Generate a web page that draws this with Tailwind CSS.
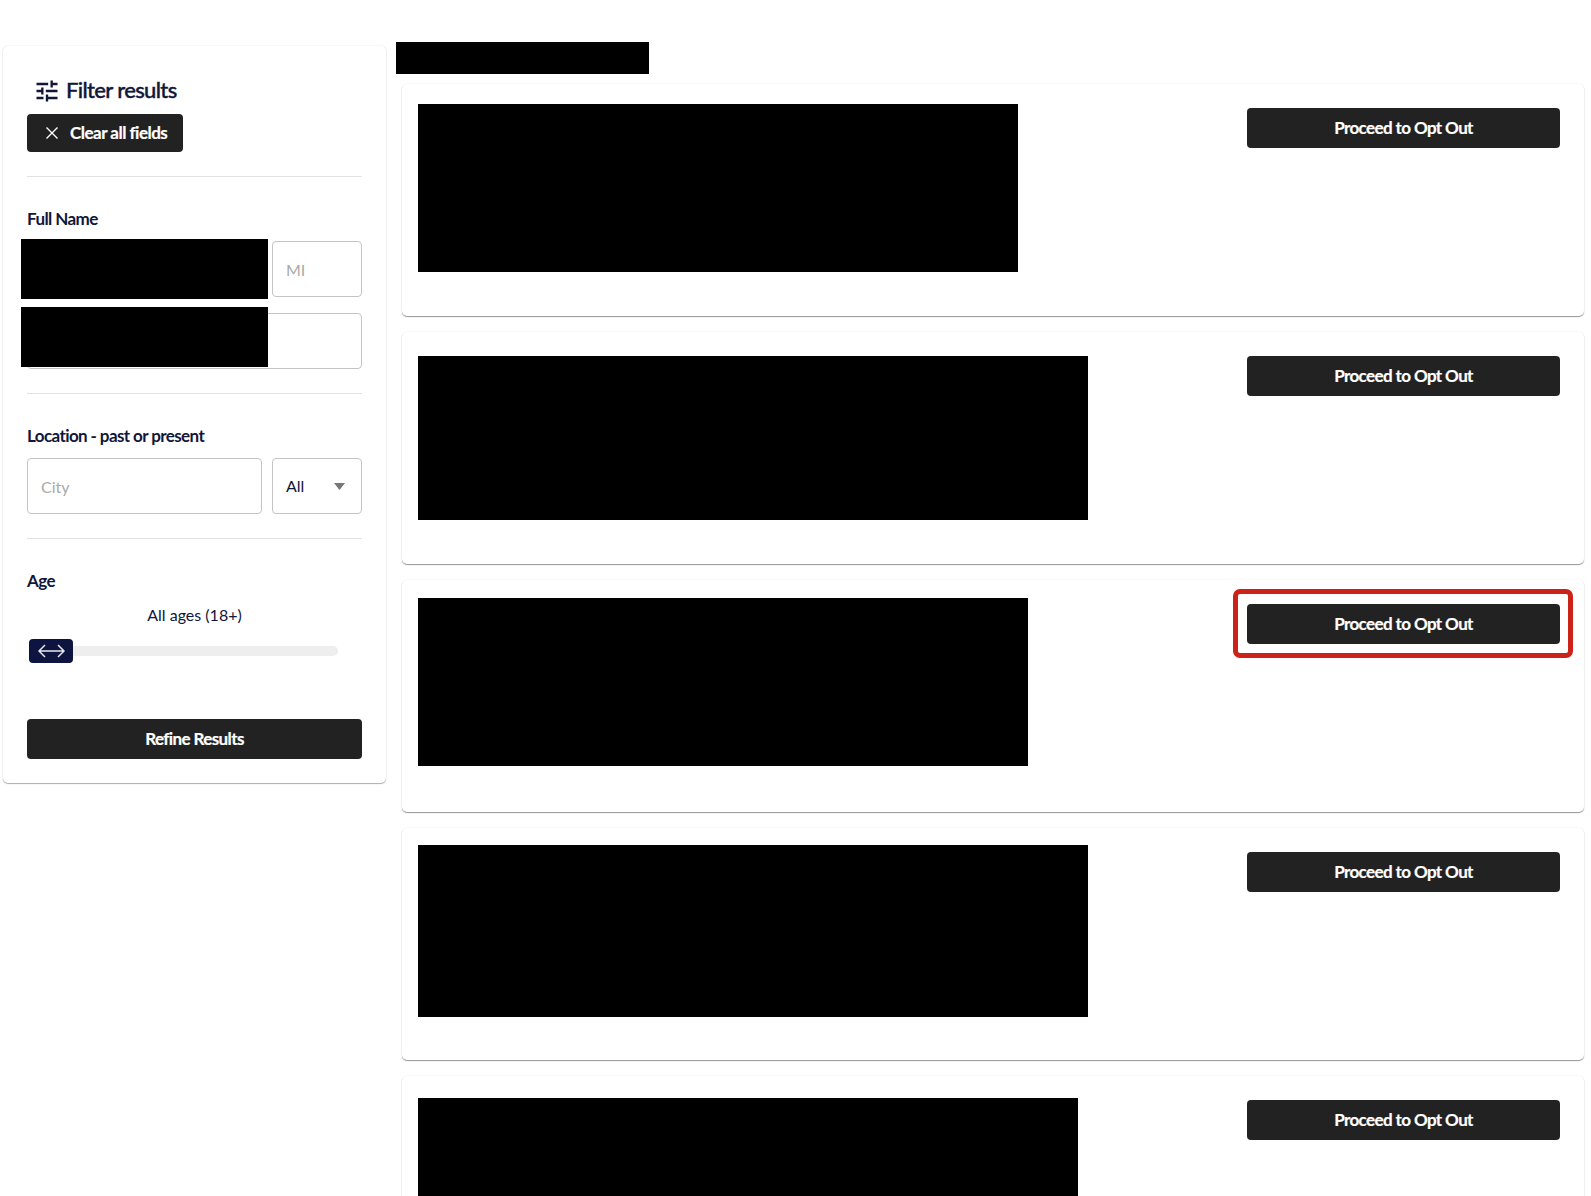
<!DOCTYPE html>
<html lang="en">
<head>
    <meta charset="UTF-8">
    <title>Search Results</title>
    <script src="https://cdn.jsdelivr.net/npm/@tailwindcss/browser@4"></script>
</head>
<body class="bg-white h-screen overflow-hidden font-['Lato','Noto_Sans',sans-serif] text-[#11163a]">
    <div class="flex items-start">

        <!-- Filter sidebar -->
        <aside class="ml-[3px] mt-[46px] w-[383px] h-[737px] shrink-0 px-6 pt-[31px] rounded-[5px] shadow-[0_0_2px_rgba(0,0,0,0.12),0_1px_1px_rgba(0,0,0,0.3)]">
            <div class="flex items-center gap-[5px] ml-[6px] h-7">
                <svg class="w-7 h-7" viewBox="0 0 24 24" fill="#11163a"><path d="M3 17v2h6v-2H3zM3 5v2h10V5H3zm10 16v-2h8v-2h-8v-2h-2v6h2zM7 9v2H3v2h4v2h2V9H7zm14 4v-2H11v2h10zm-6-4h2V7h4V5h-4V3h-2v6z"/></svg>
                <span class="pb-[2px] text-[22px] leading-7 font-medium tracking-[-0.65px] [-webkit-text-stroke:0.4px_#11163a]">Filter results</span>
            </div>
            <button class="mt-[9px] w-[156px] h-[38px] flex items-center pl-[19px] gap-[12px] bg-[#222222] rounded text-white text-[17px] font-bold tracking-[-0.5px] [-webkit-text-stroke:0.2px_white]">
                <svg class="w-3 h-3" viewBox="0 0 12 12" fill="none" stroke="white" stroke-width="1.4"><path d="M0.5 0.5l11 11M11.5 0.5l-11 11"/></svg>
                Clear all fields
            </button>
            <div class="mt-6 h-px bg-[#e2e2e2]"></div>

            <div class="mt-8 h-5 leading-5 text-[17px] font-bold tracking-[-0.6px]">Full Name</div>
            <div class="mt-3 relative flex gap-[10px]">
                <input placeholder="First" class="w-[235px] h-14 border border-[#c4c4c4] rounded">
                <input placeholder="MI" class="w-[90px] h-14 pl-[13px] border border-[#c4c4c4] rounded text-[16px] placeholder-[#aaaaaa]">
                <div class="absolute -left-[6px] -top-[2px] w-[247px] h-[60px] bg-black"></div>
            </div>
            <div class="mt-4 relative">
                <input class="block w-full h-14 border border-[#c4c4c4] rounded">
                <div class="absolute -left-[6px] -top-[6px] w-[247px] h-[60px] bg-black"></div>
            </div>
            <div class="mt-6 h-px bg-[#e2e2e2]"></div>

            <div class="mt-8 h-5 leading-5 text-[17px] font-bold tracking-[-0.6px]">Location - past or present</div>
            <div class="mt-3 flex gap-[10px]">
                <input placeholder="City" class="w-[235px] h-14 pl-[13px] border border-[#c4c4c4] rounded text-[16px] placeholder-[#aaaaaa]">
                <div class="w-[90px] h-14 pl-[13px] pr-[16px] flex items-center justify-between border border-[#c4c4c4] rounded text-[16px]">
                    All
                    <svg class="w-[11px] h-[7px]" viewBox="0 0 11 7" fill="#777777"><path d="M0 0h11L5.5 7z"/></svg>
                </div>
            </div>
            <div class="mt-6 h-px bg-[#e2e2e2]"></div>

            <div class="mt-8 h-5 leading-5 text-[17px] font-bold tracking-[-0.6px]">Age</div>
            <div class="mt-[14px] h-5 leading-5 text-center text-[16px]">All ages (18+)</div>
            <div class="mt-[14px] ml-[2px] flex items-center">
                <div class="w-11 h-6 flex items-center justify-center bg-[#0d1440] rounded">
                    <svg class="w-[27px] h-[14px]" viewBox="0 0 27 14" fill="none" stroke="#e8e8ee" stroke-width="1.5"><path d="M1 7h25M7 1L1 7l6 6M20 1l6 6-6 6"/></svg>
                </div>
                <div class="w-[265px] h-[10px] bg-[#eeeeee] rounded-r-full"></div>
            </div>
            <button class="mt-14 w-full h-10 bg-[#222222] rounded text-white text-[17px] font-bold tracking-[-0.6px] [-webkit-text-stroke:0.2px_white]">Refine Results</button>
        </aside>

        <!-- Results -->
        <main class="ml-4 w-[1182px] shrink-0">
            <div class="-ml-[6px] mt-[42px] w-[253px] h-8 bg-black"></div>

            <section class="mt-[10px] h-[232px] pl-4 pr-6 flex justify-between items-start rounded-[5px] shadow-[0_0_2px_rgba(0,0,0,0.08),0_1px_1px_rgba(0,0,0,0.4)]">
                <div class="mt-5 w-[600px] h-[168px] bg-black"></div>
                <button class="mt-6 w-[313px] h-10 bg-[#222222] rounded text-white text-[17px] font-bold tracking-[-0.6px] [-webkit-text-stroke:0.2px_white]">Proceed to Opt Out</button>
            </section>

            <section class="mt-4 h-[232px] pl-4 pr-6 flex justify-between items-start rounded-[5px] shadow-[0_0_2px_rgba(0,0,0,0.08),0_1px_1px_rgba(0,0,0,0.4)]">
                <div class="mt-6 w-[670px] h-[164px] bg-black"></div>
                <button class="mt-6 w-[313px] h-10 bg-[#222222] rounded text-white text-[17px] font-bold tracking-[-0.6px] [-webkit-text-stroke:0.2px_white]">Proceed to Opt Out</button>
            </section>

            <section class="mt-4 h-[232px] pl-4 pr-6 flex justify-between items-start rounded-[5px] shadow-[0_0_2px_rgba(0,0,0,0.08),0_1px_1px_rgba(0,0,0,0.4)]">
                <div class="mt-[18px] w-[610px] h-[168px] bg-black"></div>
                <div class="relative mt-6">
                    <button class="block w-[313px] h-10 bg-[#222222] rounded text-white text-[17px] font-bold tracking-[-0.6px] [-webkit-text-stroke:0.2px_white]">Proceed to Opt Out</button>
                    <!-- highlight round the button -->
                    <div class="absolute -left-[14px] -right-[13px] -top-[15px] -bottom-[14px] border-[5px] border-[#cc2218] rounded-[7px]"></div>
                </div>
            </section>

            <section class="mt-4 h-[232px] pl-4 pr-6 flex justify-between items-start rounded-[5px] shadow-[0_0_2px_rgba(0,0,0,0.08),0_1px_1px_rgba(0,0,0,0.4)]">
                <div class="mt-[17px] w-[670px] h-[172px] bg-black"></div>
                <button class="mt-6 w-[313px] h-10 bg-[#222222] rounded text-white text-[17px] font-bold tracking-[-0.6px] [-webkit-text-stroke:0.2px_white]">Proceed to Opt Out</button>
            </section>

            <section class="mt-4 h-[232px] pl-4 pr-6 flex justify-between items-start rounded-[5px] shadow-[0_0_2px_rgba(0,0,0,0.08),0_1px_1px_rgba(0,0,0,0.4)]">
                <div class="mt-[22px] w-[660px] h-[168px] bg-black"></div>
                <button class="mt-6 w-[313px] h-10 bg-[#222222] rounded text-white text-[17px] font-bold tracking-[-0.6px] [-webkit-text-stroke:0.2px_white]">Proceed to Opt Out</button>
            </section>
        </main>
    </div>
</body>
</html>
